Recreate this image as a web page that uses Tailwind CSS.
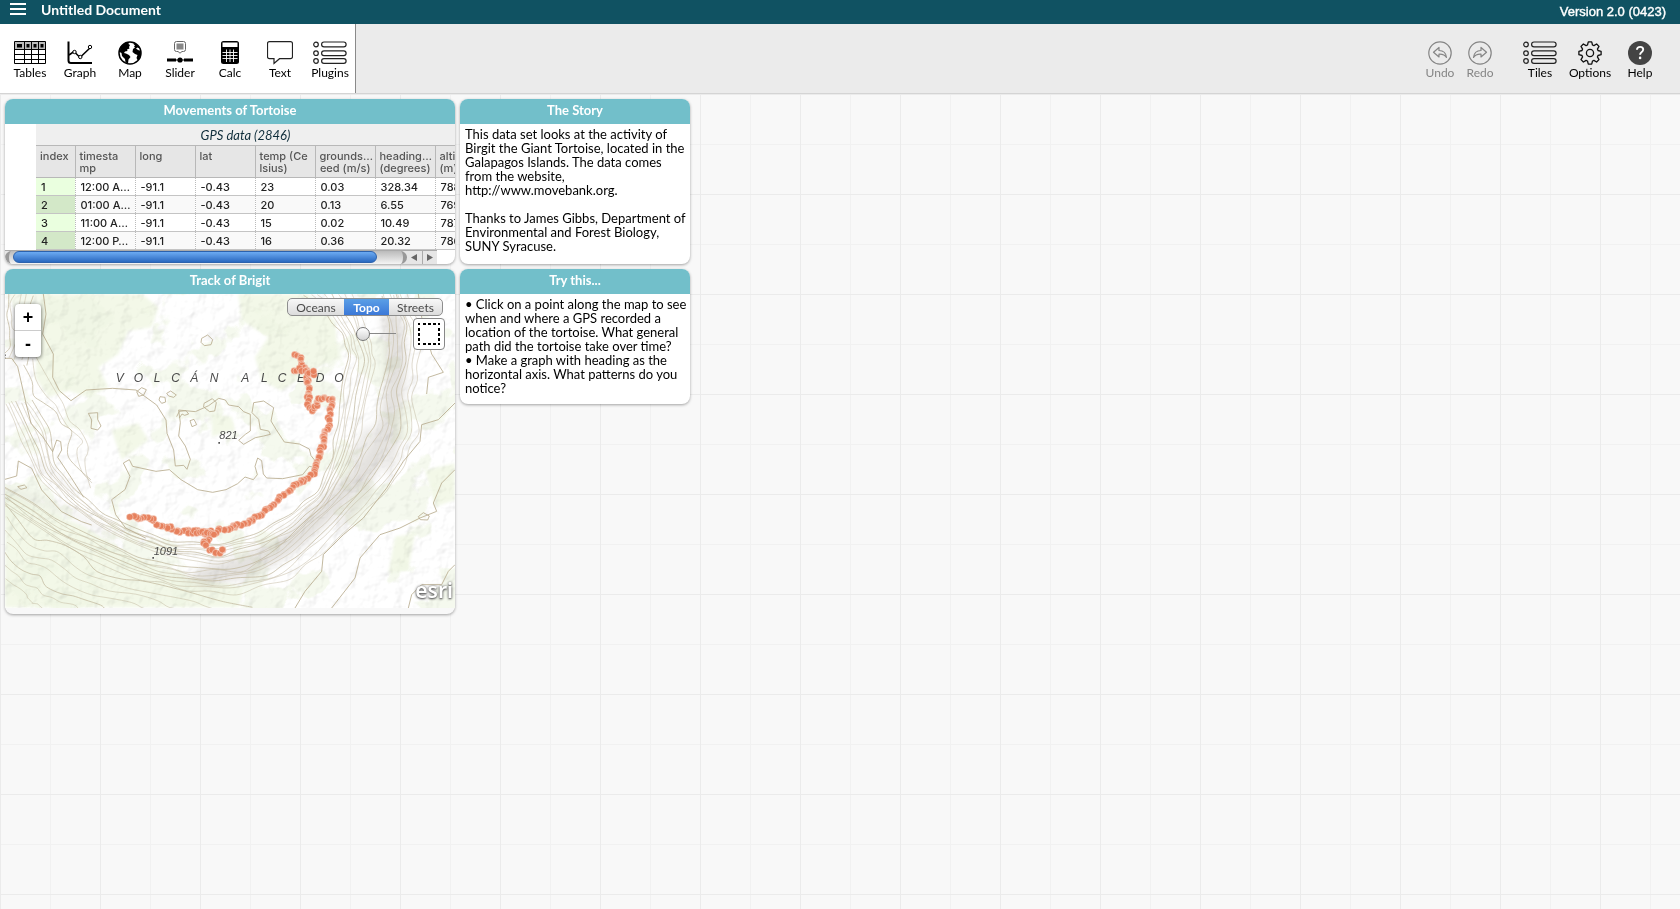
<!DOCTYPE html>
<html lang="en">
<head>
<meta charset="utf-8">
<title>Untitled Document</title>
<script src="https://cdn.jsdelivr.net/npm/@tailwindcss/browser@4"></script>
</head>
<body class="min-h-screen flex flex-col bg-[#f8f8f8] font-['Lato',sans-serif] text-[13px] text-black">

<header class="h-6 flex items-center justify-between bg-[#105262] text-white">
  <div class="flex items-center">
    <button type="button" aria-label="Menu" class="w-[41px] pl-[10px] pb-[6px]">
      <svg width="16" height="12" viewBox="0 0 16 12" fill="#fff"><path d="M0 0h16v2H0zM0 5h16v2H0zM0 10h16v2H0z"/></svg>
    </button>
    <h1 class="font-bold text-[14px] leading-5 pb-1">Untitled Document</h1>
  </div>
  <span class="pr-[14px] font-['Liberation_Sans',sans-serif] text-[13px] leading-6 [-webkit-text-stroke:0.4px_white]">Version 2.0 (0423)</span>
</header>

<nav class="h-[70px] flex justify-between bg-[#ebebeb] border-b border-[#d4d4d4] text-[12px] leading-4">
  <div class="flex pl-[5px] bg-white border-r border-[#8a8a8a]">
    <button type="button" class="w-[50px] pt-[17px] flex flex-col items-center">
      <svg width="32" height="24" viewBox="0 0 32 24" fill="none" stroke="#000"><path d="M.5.5h31v22h-31z"/><path d="M1 1h30v7H1z" fill="#bbb" stroke="none"/><path d="M.5 8.5h31M.5 13.5h31M.5 18.5h31M10.500.5v22M17.500.5v22M24.500.5v22"/><path d="M3 3h5v3.500H3zM12.500 3h3v3.500h-3zM19.500 3h3v3.500h-3zM26.500 3h3v3.500h-3z" fill="#000" stroke="none"/></svg>
      Tables
    </button>
    <button type="button" class="w-[50px] pt-[17px] flex flex-col items-center">
      <svg width="26" height="24" viewBox="0 0 26 24" fill="none" stroke="#000"><path d="M1.500.5v19q0 2.500 2.500 2.500h21" stroke-width="2"/><path d="M2 14l5-3.500 6 6L24 6" stroke-width="1.600"/><g fill="#fff"><circle cx="7.500" cy="11" r="1.700"/><circle cx="13.300" cy="16" r="1.700"/><circle cx="23" cy="6" r="1.700"/></g></svg>
      Graph
    </button>
    <button type="button" class="w-[50px] pt-[17px] flex flex-col items-center">
      <svg width="24" height="24" viewBox="0 0 24 24"><circle cx="12" cy="12" r="11" fill="#fff" stroke="#000" stroke-width="1.500"/><path d="M2.500 6.500C5 2.500 8 1.200 11 1l-.5 2 1.500 1-1 2 .5 1.500-2.500 1 .5 1.500-2.500.5L6 12l2 .5 3 1.500 1.500 2-2 2.500-.5 4-2.500-1-.5-3.500-3-3-.5-3L1.500 11zM15.500 2c3 .8 5.500 3 6.300 5.500L19.500 6.500l-1.500 1 2 1.500 3 1c.3 4-1 7-3.200 9.500l-1.300-2.500 1-3-2.500-1-2.500-2 .5-3 2-1.500-1-1 1-1-1.500-1.500z"/></svg>
      Map
    </button>
    <button type="button" class="w-[50px] pt-[17px] flex flex-col items-center">
      <svg width="26" height="24" viewBox="0 0 26 24"><path d="M9.500.5h7q2 0 2 2v6q0 2-2 2h-1.500l-2 1.700-2-1.700h-1.500q-2 0-2-2v-6q0-2 2-2z" fill="#fff" stroke="#666"/><path d="M9.500 2.500h7v6h-7z" fill="#888"/><path d="M0 17.500h9v3H0zM17 17.500h9v3h-9z"/><path d="M9 19h8" stroke="#000"/><circle cx="13" cy="19" r="2.600"/></svg>
      Slider
    </button>
    <button type="button" class="w-[50px] pt-[17px] flex flex-col items-center">
      <svg width="18" height="24" viewBox="0 0 18 24"><rect width="18" height="23" rx="2.500"/><path d="M1.500 1.500h15v4.500h-15z" fill="#fff"/><path d="M1.500 11.500h15M1.500 14.500h15M1.500 17.500h15M5.500 8.500v12.500M9 8.500v12.500M12.500 8.500v12.500" stroke="#fff" stroke-width=".9"/></svg>
      Calc
    </button>
    <button type="button" class="w-[50px] pt-[17px] flex flex-col items-center">
      <svg width="26" height="24" viewBox="0 0 26 24" fill="#fff" stroke="#222" stroke-width="1.200"><path d="M2.500.7h21q2 0 2 2v13q0 2-2 2H12.500L7 22.500v-4.800H2.500q-2 0-2-2v-13q0-2 2-2z"/></svg>
      Text
    </button>
    <button type="button" class="w-[50px] pt-[17px] flex flex-col items-center">
      <svg width="34" height="24" viewBox="0 0 34 24" fill="none" stroke="#222" stroke-width="1.200"><g id="list"><circle cx="3" cy="3.500" r="2.300"/><circle cx="3" cy="12.200" r="2.300"/><circle cx="3" cy="20" r="2.300"/><rect x="8.600" y="1" width="24.500" height="4.800" rx="2.400"/><rect x="8.600" y="9.800" width="24.500" height="4.800" rx="2.400"/><rect x="8.600" y="17.600" width="24.500" height="4.800" rx="2.400"/></g></svg>
      Plugins
    </button>
  </div>
  <div class="flex pr-[15px]">
    <button type="button" disabled class="w-10 pt-[17px] flex flex-col items-center text-[#858585]">
      <svg width="24" height="24" viewBox="0 0 24 24" fill="none" stroke="#858585" stroke-width="1.200"><circle cx="12" cy="12" r="11.200"/><path d="M5.500 11.200L11 6.500v3c4.500 0 7 2.300 7.500 7-1.500-2.500-4-3.500-7.500-3.300v2.800z" stroke-linejoin="round"/></svg>
      Undo
    </button>
    <button type="button" disabled class="w-10 pt-[17px] flex flex-col items-center text-[#858585]">
      <svg width="24" height="24" viewBox="0 0 24 24" fill="none" stroke="#858585" stroke-width="1.200"><circle cx="12" cy="12" r="11.200"/><path d="M18.500 11.200L13 6.500v3c-4.500 0-7 2.300-7.500 7 1.500-2.500 4-3.500 7.500-3.300v2.800z" stroke-linejoin="round"/></svg>
      Redo
    </button>
    <button type="button" class="w-[50px] ml-[15px] pt-[17px] flex flex-col items-center">
      <svg width="34" height="24" viewBox="0 0 34 24" fill="none" stroke="#222" stroke-width="1.200"><use href="#list"/></svg>
      Tiles
    </button>
    <button type="button" class="w-[50px] pt-[17px] flex flex-col items-center">
      <svg width="24" height="24" viewBox="0 0 24 24" fill="none" stroke="#111" stroke-width="1.300" stroke-linejoin="round"><path id="gear"/><circle cx="12" cy="12" r="3.600"/></svg>
      Options
    </button>
    <button type="button" class="w-[50px] pt-[17px] flex flex-col items-center">
      <svg width="24" height="24" viewBox="0 0 24 24"><circle cx="12" cy="12" r="12" fill="#444"/><path d="M8.900 8.800q.2-2.900 3.300-2.900 3 0 3 2.600 0 1.500-1.700 2.700-1.400 1-1.400 2.500" fill="none" stroke="#fff" stroke-width="1.900"/><circle cx="12.100" cy="16.900" r="1.300" fill="#fff"/></svg>
      Help
    </button>
  </div>
</nav>

<main class="flex-1 p-[5px] bg-[linear-gradient(to_right,#ebebeb_1px,transparent_1px),linear-gradient(to_bottom,#ebebeb_1px,transparent_1px),linear-gradient(to_right,#f1f1f1_1px,transparent_1px),linear-gradient(to_bottom,#f1f1f1_1px,transparent_1px)] bg-[size:100px_100px,100px_100px,50px_50px,50px_50px]">
  <div class="flex items-start gap-[5px]">
    <div class="w-[450px] flex flex-col gap-[5px]">

      <section class="h-[165px] rounded-lg overflow-hidden bg-white shadow-[0_1px_3px_rgba(0,0,0,0.35)]">
        <h2 class="h-[25px] bg-[#72bfca] text-white text-center font-bold leading-[22px]">Movements of Tortoise</h2>
        <div class="ml-[31px] h-[126px] overflow-hidden">
          <div class="h-[21px] bg-[#efefef] text-center italic text-[#0f2d3a] leading-[22px]">GPS data (2846)</div>
          <table class="w-[459px] table-fixed border-collapse font-['Inter',sans-serif] text-[11px] leading-3 text-left">
            <colgroup><col class="w-[39px]"><col class="w-[60px]"><col class="w-[60px]"><col class="w-[60px]"><col class="w-[60px]"><col class="w-[60px]"><col class="w-[60px]"><col class="w-[60px]"></colgroup>
            <thead>
              <tr class="h-8 bg-[#e6e6e6] text-[#555] align-top [&>th]:font-medium [&>th]:px-1 [&>th]:pt-1 [&>th]:border-t [&>th]:border-b [&>th]:border-r [&>th]:border-[#b8b8b8] [&>th]:whitespace-nowrap [&>th]:overflow-hidden">
                <th>index</th><th>timesta<br>mp</th><th>long</th><th>lat</th><th>temp (Ce<br>lsius)</th>
                <th>grounds…<div class="flex justify-end overflow-hidden">peed (m/s)</div></th>
                <th>heading…<div class="text-right">(degrees)</div></th><th>altitude<br>(m)</th>
              </tr>
            </thead>
            <tbody id="rows"></tbody>
          </table>
        </div>
        <div class="w-[432px] h-[14px] flex items-stretch border-t border-[#aaa] bg-[#e6e6e6]" role="scrollbar" aria-controls="rows" aria-valuenow="0" aria-orientation="horizontal">
          <div class="w-[402px] pl-2 rounded-full bg-linear-to-b from-[#bbb] to-[#f4f4f4] border-x-4 border-[#999]">
            <div class="w-[364px] h-3 -ml-1 rounded-full border border-[#2c62ad] bg-linear-to-b from-[#6cabf3] to-[#2a69c0]"></div>
          </div>
          <button type="button" aria-label="Scroll left" class="flex-1 flex items-center justify-center border-r border-[#aaa]"><svg width="6" height="7"><path d="M6 0v7L0 3.500z" fill="#666"/></svg></button>
          <button type="button" aria-label="Scroll right" class="flex-1 flex items-center justify-center"><svg width="6" height="7"><path d="M0 0v7l6-3.500z" fill="#666"/></svg></button>
        </div>
      </section>

      <section class="rounded-lg overflow-hidden bg-[#f8f8f8] pb-[6px] shadow-[0_1px_3px_rgba(0,0,0,0.35)]">
        <h2 class="h-[25px] bg-[#72bfca] text-white text-center font-bold leading-[22px]">Track of Brigit</h2>
        <div class="relative">
          <svg class="block w-full h-auto" viewBox="0 12 1350 942" fill="none">
            <defs>
              <filter id="patch" x="0" y="0" width="100%" height="100%" color-interpolation-filters="sRGB"><feTurbulence type="fractalNoise" baseFrequency=".007" numOctaves="4" seed="8"/><feColorMatrix values="0 0 0 0 .937  0 0 0 0 .96  0 0 0 0 .89  20 0 0 0 -11"/><feComposite operator="in" in2="SourceGraphic"/></filter>
              <filter id="relief" x="0" y="0" width="100%" height="100%" color-interpolation-filters="sRGB"><feTurbulence type="fractalNoise" baseFrequency=".022" numOctaves="3" seed="4"/><feDiffuseLighting surfaceScale="7" diffuseConstant="1.180" lighting-color="#fff"><feDistantLight azimuth="225" elevation="58"/></feDiffuseLighting><feComposite operator="in" in2="SourceGraphic"/></filter>
              <filter id="soft" x="-10%" y="-10%" width="120%" height="120%"><feGaussianBlur stdDeviation="4"/></filter>
              <filter id="haze" x="-10%" y="-10%" width="120%" height="120%"><feGaussianBlur stdDeviation="12"/></filter>
            </defs>
            <path fill="#fff" d="M0 12h1350v942H0z"/>
            <g fill="#f3f8e8" filter="url(#soft)">
              <path d="M110 12h300l50 40-20 60-70 10-30 70-60 40 30 60-60 30-60-20-60 20-40-60z"/>
              <path d="M700 12h210l80 80 10 110-80 40-90 60-60-30-20-70 40-60-80-50z"/>
              <path d="M0 600l90 50 150 60 140 90 160 60 180 30-20 62H0z"/>
              <path d="M320 420l80-20 30 50-80 60z"/><path d="M620 370l60 10 10 40-70 20z"/>
              <path d="M1260 540l90-20v110l-60 20z"/><path d="M1170 740l60-10-20 110-60 10z"/>
            </g>
            <path d="M0 12h1350v942H0z" fill="#fff" filter="url(#patch)" opacity=".6"/>
            <g filter="url(#haze)" stroke="#8d8478" stroke-linecap="round" opacity=".24">
              <path stroke-width="60" d="M1160 90Q1190 250 1150 400Q1120 500 1050 570Q970 660 880 740Q780 820 600 860"/>
              <path stroke-width="20" d="M1090 420L1040 510M1130 500L1080 590M1020 570L960 650M1180 430L1150 540M1090 600L1010 700M880 730L790 790"/>
              <path stroke-width="16" opacity=".6" d="M0 600L190 660L330 745M20 110L30 240M100 520L200 600M540 870L760 860"/>
            </g>
            <path d="M0 12h1350v942H0z" fill="#fff" filter="url(#relief)" opacity=".2" style="mix-blend-mode:multiply"/>
            <g id="contours" stroke="#c0b69c" stroke-width="2.200"></g>
            <g stroke="#b9ae91" stroke-width="2.600" stroke-linejoin="round">
              <path d="M115 12l8 60-10 60 32 60-2 70 20 40 35 30 45-32 80-5 70 5 62 45 28 45 3 40 20 50 5 48 25-2 10 12 10-30-15-40-20-30 5-40-5-38 50 5 40-18 30-22 20 5 10 15 30 5 15 15 20 8v50l-15 10-20 18 15 12 35-20 25-5 20-5-5-10-25-5-5-30-20-20 5-30 30-5 30 20-8 40 15 25 25 38 45 6 30 15 5 20 18 22-1 15-22-5-20 25-60 12-48-2-10-12-5-40-12-8-8 25 7 25-12 15-25-8-22 20-35 18-40 8-45-8-50-30-35-30-40 5-70-15-10-20-18 10 20 40-15 40-40 30 12 45 30 40 60 30"/>
              <path d="M590 145l18-10 15 14-5 15-20 3-10-10zM395 305l15-12 14 6-8 16-15 4zM465 320l15 2 2 14-12 4-8-10zM485 310l12-7 17 12-8 7-15-4zM597 340l25-14 12 12-5 25-15 2-18-14zM515 380l8-16 20-2 8 10-12 4-8-4-8 12M555 392l12-4 8 16-14 6zM250 370l28-2v20l10 20-10 12-20-5 2-25zM1240 680l15-12 18 10-5 12-22-1zM38 590l20-5 8 8-18 5z"/>
              <path d="M0 568l35-10 5-45 40 22 30 65 60 65 60 30 30 10M0 205l20 0 18 25 25 110 15 60 35 40 30 45 12-35 12 5 3 25-12 22 40 60 38 60"/>
              <path d="M870 954l30-50 50-60 5-50 60-60 60-50 70-90 50-80 50-60 5-50 50-15 50-50M980 954l70-90 15-60 60-70 60-20 60-30 50-20-10-25 25-60 40-40M1210 954l10-40 30-30 60 0 20-40 20-20M1240 12l10 70 30 110 35 55-45 15-5 50"/>
            </g>
            <g font-family="Liberation Sans, sans-serif" font-style="italic" fill="#4a4a4a">
              <text y="276" font-size="36" id="volcano"></text>
              <text x="643" y="448" font-size="33">821</text><text x="446" y="794" font-size="33">1091</text>
              <text x="-12" y="211" font-size="26">8</text>
            </g>
            <path fill="#555" d="M640 456h5v5h-5zM442 801h5v5h-5z"/>
            <g id="track" fill="#e67f5c" stroke="#fbe3da" stroke-width="1.800" stroke-opacity=".8"></g>
          </svg>

          <div class="absolute left-[10px] top-[10px] w-[26px] rounded bg-white shadow-[0_1px_4px_rgba(0,0,0,0.65)] flex flex-col font-['Liberation_Sans',sans-serif] font-bold text-[18px] leading-[26px]">
            <button type="button" aria-label="Zoom in" class="h-[27px] border-b border-[#ccc]">+</button>
            <button type="button" aria-label="Zoom out" class="h-[26px]">-</button>
          </div>
          <div class="absolute left-[282px] top-1 w-[156px] h-[18px] flex rounded-[5px] border border-[#8e8e8e] overflow-hidden text-[12px] leading-[15px] text-[#4a4a4a] bg-linear-to-b from-[#f8f8f8] to-[#dcdcdc]">
            <button type="button" class="w-[56px]">Oceans</button>
            <button type="button" class="w-[45px] bg-linear-to-b from-[#5b9fe6] to-[#3c78d8] text-white font-bold">Topo</button>
            <button type="button" class="flex-1">Streets</button>
          </div>
          <input type="range" aria-label="Point size" value="0" class="absolute left-[351px] top-8 w-10 h-[14px] appearance-none bg-transparent [&::-webkit-slider-runnable-track]:h-px [&::-webkit-slider-runnable-track]:bg-[#888] [&::-webkit-slider-thumb]:appearance-none [&::-webkit-slider-thumb]:size-[14px] [&::-webkit-slider-thumb]:-mt-[6px] [&::-webkit-slider-thumb]:rounded-full [&::-webkit-slider-thumb]:border [&::-webkit-slider-thumb]:border-[#777] [&::-webkit-slider-thumb]:bg-linear-to-b [&::-webkit-slider-thumb]:from-white [&::-webkit-slider-thumb]:to-[#d4d4d4]">
          <button type="button" aria-label="Select points" class="absolute left-[408px] top-6 size-8 rounded border border-[#888] bg-white flex items-center justify-center">
            <svg width="22" height="22" viewBox="0 0 22 22" fill="none" stroke="#000" stroke-width="2"><path d="M0 1h2M5 1h3M10 1h3M15 1h3M20 1h2M0 21h2M5 21h3M10 21h3M15 21h3M20 21h2M1 0v2M1 5v3M1 10v3M1 15v3M1 20v2M21 0v2M21 5v3M21 10v3M21 15v3M21 20v2"/></svg>
          </button>
          <a href="#" class="absolute right-[2px] bottom-[6px] font-['Noto_Sans',sans-serif] font-semibold text-[21px] leading-6 text-white [text-shadow:0_1px_2px_#555,0_0_3px_#666]">esri</a>
        </div>
      </section>
    </div>

    <div class="w-[230px] flex flex-col gap-[5px]">
      <section class="h-[165px] rounded-lg overflow-hidden bg-white shadow-[0_1px_3px_rgba(0,0,0,0.35)]">
        <h2 class="h-[25px] bg-[#72bfca] text-white text-center font-bold leading-[22px]">The Story</h2>
        <div class="pl-[5px] pt-[3px] leading-[14px] flex flex-col gap-[14px] whitespace-nowrap">
          <p>This data set looks at the activity of<br>Birgit the Giant Tortoise, located in the<br>Galapagos Islands. The data comes<br>from the website,<br>http://www.movebank.org.</p>
          <p>Thanks to James Gibbs, Department of<br>Environmental and Forest Biology,<br>SUNY Syracuse.</p>
        </div>
      </section>
      <section class="h-[135px] rounded-lg overflow-hidden bg-white shadow-[0_1px_3px_rgba(0,0,0,0.35)]">
        <h2 class="h-[25px] bg-[#72bfca] text-white text-center font-bold leading-[22px]">Try this...</h2>
        <div class="pl-[5px] pt-[3px] leading-[14px] whitespace-nowrap">
          <p>• Click on a point along the map to see<br>when and where a GPS recorded a<br>location of the tortoise. What general<br>path did the tortoise take over time?</p>
          <p>• Make a graph with heading as the<br>horizontal axis. What patterns do you<br>notice?</p>
        </div>
      </section>
    </div>
  </div>
</main>

<script>
const NS = 'http://www.w3.org/2000/svg';
const add = (parent, tag, attrs) => {
  const el = document.createElementNS(NS, tag);
  for (const k in attrs) el.setAttribute(k, attrs[k]);
  parent.appendChild(el);
  return el;
};

// data rows
const data = [
  ['1','12:00 A…','-91.1','-0.43','23','0.03','328.34','788.12'],
  ['2','01:00 A…','-91.1','-0.43','20','0.13','6.55','769.20'],
  ['3','11:00 A…','-91.1','-0.43','15','0.02','10.49','787.51'],
  ['4','12:00 P…','-91.1','-0.43','16','0.36','20.32','786.33']];
document.getElementById('rows').innerHTML = data.map((r, i) =>
  `<tr class="h-[18px] ${i % 2 ? 'bg-[#f9f9f9]' : 'bg-white'}">` + r.map((v, j) => j
    ? `<td class="pl-[5px] overflow-hidden whitespace-nowrap font-medium text-[#222] border-b border-b-[#c4c4c4] border-l border-l-[#bbb] [border-left-style:dotted]">${v}</td>`
    : `<th class="pl-[5px] font-medium text-[#222] border-b border-b-[#c4c4c4] ${i % 2 ? 'bg-[#d3e8c8]' : 'bg-[#eaffdf]'}">${v}</th>`).join('') + '</tr>').join('');

// gear outline: eight teeth
let g = '';
for (let i = 0; i < 8; i++) {
  const a = i * Math.PI / 4, p = (r, d) => (12 + r * Math.sin(a + d)).toFixed(1) + ' ' + (12 - r * Math.cos(a + d)).toFixed(1);
  g += (i ? 'L' : 'M') + p(8.4, -.3) + 'L' + p(11.2, -.15) + 'L' + p(11.2, .15) + 'L' + p(8.4, .3);
}
document.getElementById('gear').setAttribute('d', g + 'Z');

// spaced place name
const xs = [332, 386, 446, 499, 556, 614, 709, 768, 818, 876, 932, 988];
const name = document.getElementById('volcano');
name.setAttribute('x', xs.slice(0, 6).join(' ') + ' 660 ' + xs.slice(6).join(' '));
name.textContent = 'VOLCÁN ALCEDO';

// deterministic noise
let seed = 7;
const rnd = () => (seed = (seed * 16807) % 2147483647) / 2147483647 - .5;

// contour families: lines blended between an inner and an outer ridge
const smooth = p => {
  let d = 'M' + p[0];
  for (let i = 0; i < p.length - 1; i++) {
    const a = p[i - 1] || p[i], b = p[i], c = p[i + 1], e = p[i + 2] || c;
    d += `C${b[0] + (c[0] - a[0]) / 6} ${b[1] + (c[1] - a[1]) / 6} ${c[0] - (e[0] - b[0]) / 6} ${c[1] - (e[1] - b[1]) / 6} ${c[0]} ${c[1]}`;
  }
  return d;
};
const family = (A, B, n, wob) => {
  for (let k = 0; k <= n; k++) {
    const t = k / n, pts = [];
    A.forEach((a, i) => {
      const b = B[i], x = a[0] + (b[0] - a[0]) * t, y = a[1] + (b[1] - a[1]) * t;
      pts.push([x + rnd() * wob, y + rnd() * wob]);
      if (A[i + 1]) {
        const a2 = A[i + 1], b2 = B[i + 1];
        pts.push([(x + a2[0] + (b2[0] - a2[0]) * t) / 2 + rnd() * wob, (y + a2[1] + (b2[1] - a2[1]) * t) / 2 + rnd() * wob]);
      }
    });
    add(document.getElementById('contours'), 'path', { d: smooth(pts), opacity: k % 4 ? .65 : 1 });
  }
};
family([[900,12],[960,70],[1010,130],[1028,200],[1008,300],[996,400],[980,500],[935,600],[860,670],[760,730],[640,760],[500,755],[380,715],[290,665],[210,600],[150,520],[130,420],[80,330]],
       [[1040,12],[1075,90],[1095,160],[1110,220],[1085,330],[1065,430],[1030,530],[960,650],[860,745],[760,795],[640,825],[510,800],[380,760],[270,700],[180,640],[100,560],[50,450],[0,340]], 7, 9);
family([[1130,12],[1150,100],[1150,200],[1120,300],[1110,400],[1060,500],[1000,600],[900,700],[800,790],[680,840],[520,830],[400,800],[280,745],[150,680],[0,590]],
       [[1200,12],[1250,120],[1240,220],[1225,320],[1240,430],[1200,520],[1130,610],[1040,700],[950,790],[850,865],[700,910],[540,900],[400,865],[200,780],[0,640]], 7, 13);
family([[0,640],[90,740],[180,770],[280,840],[420,880],[640,925],[740,954]],
       [[0,860],[30,890],[60,910],[80,930],[95,940],[110,950],[120,970]], 6, 14);
family([[10,12],[0,80],[20,140],[0,200]], [[85,12],[60,80],[90,150],[60,220]], 4, 14);
family([[60,220],[90,320],[150,360],[200,430],[190,510],[260,570]], [[100,200],[150,310],[190,390],[250,460],[245,510],[255,590]], 2, 14);

// GPS fixes along the walk
const legs = [
  [[873,190],[885,205],[895,225],[905,245],[908,290],[911,325],[912,355],[925,366],[935,345],[945,325],[985,330],[975,370],[968,410],[955,450],[945,500],[928,550],[900,565],[875,585],[840,612],[800,645],[760,680],[720,700],[670,715],[630,725],[590,722],[550,720],[520,722],[490,712],[455,700],[435,686],[400,685],[370,680]],
  [[612,725],[608,745],[598,765],[620,782],[645,790],[662,776]],
  [[868,245],[885,235],[905,248],[930,252],[922,240]],
  [[550,725],[590,730],[635,732]]];
const track = document.getElementById('track');
legs.forEach(leg => leg.slice(1).forEach((b, i) => {
  const a = leg[i], len = Math.hypot(b[0] - a[0], b[1] - a[1]), n = Math.max(2, Math.round(len / 8));
  for (let k = 0; k < n; k++)
    add(track, 'circle', { cx: (a[0] + (b[0] - a[0]) * k / n + rnd() * 10).toFixed(1), cy: (a[1] + (b[1] - a[1]) * k / n + rnd() * 10).toFixed(1), r: 10, 'fill-opacity': rnd() > -.2 ? .95 : .6 });
}));
</script>
</body>
</html>
